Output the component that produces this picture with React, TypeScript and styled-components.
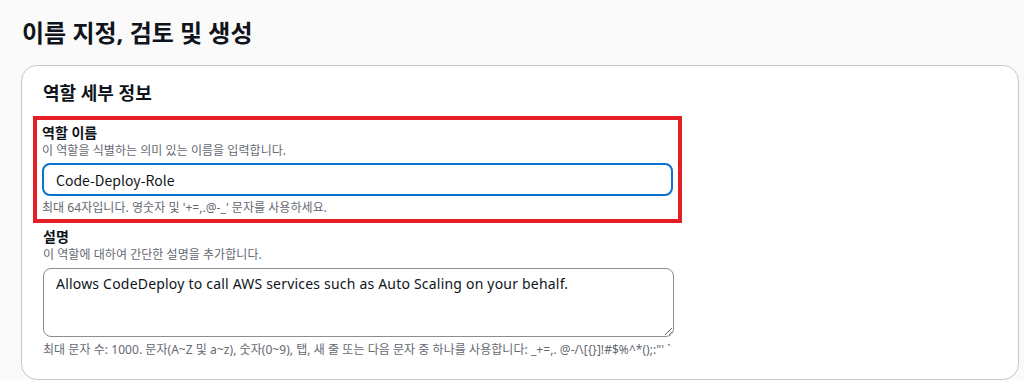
import React from "react";
import styled, { createGlobalStyle } from "styled-components";

const Global = createGlobalStyle`
  html, body { margin: 0; padding: 0; background: #fafafa; }
  body {
    font-family: "Noto Sans", "Noto Sans CJK KR", sans-serif;
    color: #0f141a;
  }
  * { box-sizing: border-box; }
`;

const Page = styled.div`
  padding: 18px 5px 0 21px;
  display: flex;
  flex-direction: column;
  gap: 17px;
`;

const Heading = styled.h1`
  margin: 0;
  font-size: 24px;
  line-height: 30px;
  font-weight: 700;
  padding-left: 1px;
`;

const Card = styled.section`
  background: #ffffff;
  border: 1px solid #c6c6cd;
  border-radius: 16px;
  padding: 15px 20px 20px 11px;
  display: flex;
  flex-direction: column;
  gap: 11px;
  min-height: 315px;
`;

const CardTitle = styled.h2`
  margin: 0 0 0 10px;
  font-size: 18px;
  line-height: 24px;
  font-weight: 700;
`;

const Highlight = styled.div`
  width: 649px;
  border: 4px solid #e31e24;
  padding: 3px 5px 3px 5px;
`;

const Field = styled.div<{ $inset?: boolean; $pull?: number }>`
  display: flex;
  flex-direction: column;
  width: 631px;
  margin-left: ${(p) => (p.$inset ? "10px" : "0")};
  margin-top: ${(p) => p.$pull ?? 0}px;
`;

const Label = styled.label`
  font-size: 14px;
  line-height: 20px;
  font-weight: 700;
`;

const Hint = styled.div<{ $gap?: number }>`
  font-size: 12px;
  line-height: 16px;
  color: #656871;
  margin-top: ${(p) => p.$gap ?? 0}px;
  white-space: nowrap;
  letter-spacing: 0.05px;
`;

const Input = styled.input`
  margin-top: 4px;
  height: 33px;
  width: 100%;
  border: 2px solid #0972d3;
  border-radius: 8px;
  padding: 0 12px;
  font-family: "Noto Sans CJK KR", "Noto Sans", sans-serif;
  font-size: 14px;
  color: #0f141a;
  background: #fff;
  outline: none;
`;

const TextArea = styled.textarea`
  margin-top: 5px;
  height: 69px;
  width: 100%;
  border: 1px solid #8c8c94;
  border-radius: 8px;
  padding: 4px 12px;
  font-family: "Noto Sans", "Noto Sans CJK KR", sans-serif;
  font-size: 14px;
  line-height: 22px;
  letter-spacing: 0.2px;
  color: #0f141a;
  background: #fff;
  resize: vertical;
  outline: none;
  display: block;
`;

export default function App() {
  return (
    <>
      <Global />
      <Page>
        <Heading>이름 지정, 검토 및 생성</Heading>
        <Card>
          <CardTitle>역할 세부 정보</CardTitle>
          <Highlight>
            <Field>
              <Label>역할 이름</Label>
              <Hint>이 역할을 식별하는 의미 있는 이름을 입력합니다.</Hint>
              <Input defaultValue="Code-Deploy-Role" />
              <Hint $gap={4}>최대 64자입니다. 영숫자 및 '+=,.@-_' 문자를 사용하세요.</Hint>
            </Field>
          </Highlight>
          <Field $inset $pull={-7}>
            <Label>설명</Label>
            <Hint>이 역할에 대하여 간단한 설명을 추가합니다.</Hint>
            <TextArea defaultValue="Allows CodeDeploy to call AWS services such as Auto Scaling on your behalf." />
            <Hint $gap={5}>
              최대 문자 수: 1000. 문자(A~Z 및 a~z), 숫자(0~9), 탭, 새 줄 또는 다음 문자 중 하나를 사용합니다: _+=,. @-/\[{"{"}{"}"}]!#$%^*();:"' `
            </Hint>
          </Field>
        </Card>
      </Page>
    </>
  );
}
